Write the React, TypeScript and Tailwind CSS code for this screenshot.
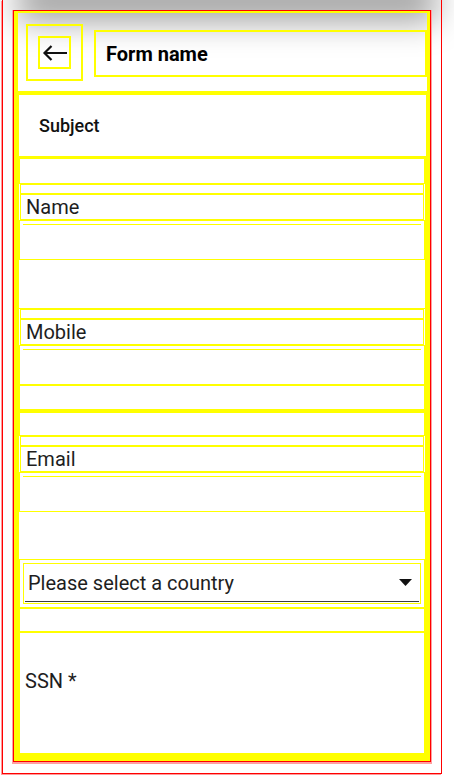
import React from "react";

// debug-outlined mobile form screen

const font = { fontFamily: "Roboto, 'Noto Sans', sans-serif" };

function BackArrow() {
  return (
    <svg width="26" height="16" viewBox="0 0 26 16" fill="none">
      <path d="M25 8H2.5M9.5 1L2.5 8L9.5 15" stroke="#111" strokeWidth="2.2" />
    </svg>
  );
}

function Field({ label, pad }: { label: string; pad?: boolean }) {
  return (
    <div className={pad ? "border-t border-[#ffff00]" : ""}>
      <div className="mx-px h-[10px] border border-[#ffff00]" />
      <div className="mx-px h-[26px] border border-[#ffff00] pl-[5px] text-[20px] leading-[24px] text-[#1e1e1e]">
        {label}
      </div>
      <div className="h-[40px] border border-[#ffff00] pt-[3px]">
        <div className="mx-[3px] h-px bg-[#ffff00]" />
      </div>
    </div>
  );
}

export default function App() {
  return (
    <div className="w-[454px] h-[784px] overflow-hidden bg-white" style={font}>
      {/* shadow of the bar sitting above the viewport */}
      <div className="mx-[40px] h-0 shadow-[0_0_32px_22px_rgba(0,0,0,0.36)]" />
      <div className="ml-[2px] w-[440px] border-x border-b border-[#ff0000] pt-[10px] pb-[11px] px-[10px] shadow-[-1px_1px_0_0_#ff9a9a]">
        <div className="border border-[#ff0000] shadow-[0_1px_0_1px_#ffa0a0]">
          <div className="border-l-[4px] border-t-[2px] border-r-[3px] border-b-[7px] border-[#ffff00]">
            {/* header */}
            <div className="flex h-[82px] border-b-4 border-[#ffff00]">
              <div className="ml-[8px] mt-[11px] h-[57px] w-[57px] border-2 border-[#ffff00] pl-[10px] pt-[10px]">
                <div className="flex h-[33px] w-[33px] items-center justify-center border-2 border-[#ffff00]">
                  <BackArrow />
                </div>
              </div>
              <div className="ml-[11px] mt-[17px] flex h-[47px] flex-1 items-center border-2 border-[#ffff00] pl-[10px] text-[20px] font-bold text-black">
                Form name
              </div>
            </div>

            {/* subject */}
            <div className="flex h-[63px] items-center border-x border-b-2 border-[#ffff00] pl-[20px] text-[18px] font-medium text-[#111]">
              Subject
            </div>

            {/* body */}
            <div className="border-l border-r-2 border-[#ffff00]">
              <div className="h-[26px] border border-[#ffff00]" />
              <Field label="Name" />
              <div className="h-[48px]" />
              <Field label="Mobile" pad />
              <div className="h-[25px] border border-[#ffff00]" />
              <div className="h-[2px] bg-[#ffff00]" />
              <div className="h-[24px] border border-[#ffff00]" />
              <Field label="Email" />
              <div className="h-[47px]" />

              {/* country select */}
              <div className="h-[49px] border border-[#ffff00] p-[3px]">
                <div className="h-[41px] border border-[#ffff00] px-px">
                  <div className="flex h-[38px] items-center justify-between border-b border-[#3a3a3a] pl-[3px] pr-[7px] text-[20px] text-[#1e1e1e]">
                    <span>Please select a country</span>
                    <svg width="13" height="7" viewBox="0 0 13 7">
                      <polygon points="0,0 13,0 6.5,7" fill="#111" />
                    </svg>
                  </div>
                </div>
              </div>

              <div className="h-[24px] border border-[#ffff00]" />

              {/* SSN */}
              <div className="h-[122px] border border-[#ffff00] pl-[5px] pt-[36px] text-[20px] leading-[24px] text-[#1e1e1e]">
                SSN *
              </div>
            </div>
          </div>
        </div>
      </div>
    </div>
  );
}
